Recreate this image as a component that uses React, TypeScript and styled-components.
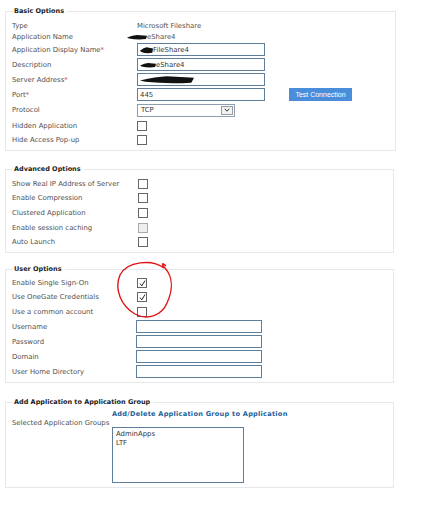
import styled, { createGlobalStyle } from "styled-components";

const GlobalStyle = createGlobalStyle`
  body {
    margin: 0;
    background: #fff;
    font-family: "DejaVu Sans", Verdana, sans-serif;
    font-size: 6.9px;
    color: #505050;
  }
`;

const Page = styled.div`
  position: relative;
  width: 395px;
  padding: 6px 0 0 5px;
`;

const Box = styled.fieldset<{ $w: number; $gap: number; $pt?: number; $pb?: number }>`
  box-sizing: border-box;
  width: ${(p) => p.$w}px;
  min-width: 0;
  margin: 0 0 ${(p) => p.$gap}px;
  padding: ${(p) => p.$pt ?? 2}px 0 ${(p) => p.$pb ?? 3}px 6px;
  border: 1px solid #e8e8e8;
`;

const Legend = styled.legend`
  padding: 0 3px 0 1px;
  margin-left: 1px;
  font-size: 6.5px;
  font-weight: bold;
  line-height: 10px;
  color: #222;
`;

const Row = styled.div<{ $h: number; $label?: number; $top?: boolean }>`
  display: grid;
  grid-template-columns: ${(p) => p.$label ?? 125}px 1fr;
  align-items: ${(p) => (p.$top ? "start" : "center")};
  height: ${(p) => p.$h}px;
`;

const Label = styled.div`
  white-space: nowrap;
  line-height: 8px;
`;

const Req = styled.span`
  color: #d43a3a;
`;

const Value = styled.div<{ $shift?: number }>`
  display: flex;
  align-items: center;
  white-space: nowrap;
  margin-left: ${(p) => p.$shift ?? 0}px;
`;

const Controls = styled.div`
  display: flex;
  align-items: center;
`;

const Field = styled.div<{ $w: number }>`
  box-sizing: border-box;
  display: flex;
  align-items: center;
  width: ${(p) => p.$w}px;
  height: 13px;
  padding: 0 2px;
  border: 1px solid #5f7e9b;
  background: #fff;
  color: #333;
  white-space: nowrap;
  overflow: hidden;
`;

const Select = styled.div`
  box-sizing: border-box;
  display: flex;
  align-items: center;
  justify-content: space-between;
  width: 98px;
  height: 13px;
  padding: 0 1px 0 3px;
  border: 1px solid #8c9db0;
  color: #333;
`;

const DropBtn = styled.span`
  box-sizing: border-box;
  display: flex;
  align-items: center;
  justify-content: center;
  width: 12px;
  height: 9px;
  border: 1px solid #9a9a9a;
  background: #f2f2f2;
`;

const TestButton = styled.div`
  margin-left: 24px;
  width: 63px;
  height: 13px;
  display: flex;
  align-items: center;
  justify-content: center;
  background: #4a8edb;
  color: #fff;
  font-family: "Liberation Sans", Arial, sans-serif;
  font-size: 7px;
`;

const Check = styled.span<{ $muted?: boolean }>`
  box-sizing: border-box;
  display: flex;
  align-items: center;
  justify-content: center;
  width: 10px;
  height: 10px;
  border: 1px solid ${(p) => (p.$muted ? "#a9a9a9" : "#666")};
  background: ${(p) => (p.$muted ? "#efefef" : "#fff")};
`;

const Link = styled.div`
  font-size: 6.6px;
  font-weight: bold;
  letter-spacing: 0.25px;
  color: #1f5f9c;
  white-space: nowrap;
`;

const ListBox = styled.div`
  box-sizing: border-box;
  width: 132px;
  height: 56px;
  margin-top: 8px;
  padding: 2px 3px;
  border: 1px solid #5f7e9b;
  color: #333;
  line-height: 9px;
`;

const Annotation = styled.svg`
  position: absolute;
  left: 0;
  top: 0;
  pointer-events: none;
`;

const Blot = ({ w, h = 7 }: { w: number; h?: number }) => (
  <svg width={w} height={h} viewBox={`0 0 ${w} ${h}`}>
    <path
      d={`M0 ${h * 0.6} Q ${w * 0.3} ${h * 0.2} ${w * 0.5} ${h * 0.15} L ${w} ${h * 0.3} L ${w * 0.95} ${h * 0.85} Q ${w * 0.5} ${h} ${w * 0.1} ${h * 0.75} Z`}
      fill="#111"
    />
  </svg>
);

const Tick = () => (
  <svg width="7" height="7" viewBox="0 0 7 7">
    <path d="M1 3.6 L2.8 5.8 L6 0.6" stroke="#222" strokeWidth="1" fill="none" />
  </svg>
);

const Chevron = () => (
  <svg width="6" height="4" viewBox="0 0 6 4">
    <path d="M0.8 0.8 L3 3.2 L5.2 0.8" stroke="#333" strokeWidth="1" fill="none" />
  </svg>
);

const advanced = [
  "Show Real IP Address of Server",
  "Enable Compression",
  "Clustered Application",
  "Enable session caching",
  "Auto Launch",
];

const advHeights = [15, 14, 15, 15, 14];

export default function App() {
  return (
    <>
      <GlobalStyle />
      <Page>
        <Box $w={391} $gap={13} $pt={4}>
          <Legend>Basic Options</Legend>
          <Row $h={11}>
            <Label>Type</Label>
            <Value>Microsoft Fileshare</Value>
          </Row>
          <Row $h={11}>
            <Label>Application Name</Label>
            <Value $shift={-10}>
              <Blot w={20} h={6} />
              eShare4
            </Value>
          </Row>
          <Row $h={15}>
            <Label>
              Application Display Name<Req>*</Req>
            </Label>
            <Field $w={128}>
              <Blot w={13} h={8} />
              FileShare4
            </Field>
          </Row>
          <Row $h={15}>
            <Label>Description</Label>
            <Field $w={128}>
              <Blot w={16} h={6} />
              eShare4
            </Field>
          </Row>
          <Row $h={15}>
            <Label>
              Server Address<Req>*</Req>
            </Label>
            <Field $w={128}>
              <Blot w={54} h={9} />
            </Field>
          </Row>
          <Row $h={15}>
            <Label>
              Port<Req>*</Req>
            </Label>
            <Controls>
              <Field $w={128}>445</Field>
              <TestButton>Test Connection</TestButton>
            </Controls>
          </Row>
          <Row $h={16}>
            <Label>Protocol</Label>
            <Select>
              TCP
              <DropBtn>
                <Chevron />
              </DropBtn>
            </Select>
          </Row>
          <Row $h={15}>
            <Label>Hidden Application</Label>
            <Check />
          </Row>
          <Row $h={14}>
            <Label>Hide Access Pop-up</Label>
            <Check />
          </Row>
        </Box>

        <Box $w={389} $gap={11}>
          <Legend>Advanced Options</Legend>
          {advanced.map((label, i) => (
            <Row key={label} $h={advHeights[i]} $label={126}>
              <Label>{label}</Label>
              <Check $muted={i === 3} />
            </Row>
          ))}
        </Box>

        <Box $w={389} $gap={14}>
          <Legend>User Options</Legend>
          <Row $h={14}>
            <Label>Enable Single Sign-On</Label>
            <Check>
              <Tick />
            </Check>
          </Row>
          <Row $h={14}>
            <Label>Use OneGate Credentials</Label>
            <Check>
              <Tick />
            </Check>
          </Row>
          <Row $h={15}>
            <Label>Use a common account</Label>
            <Check />
          </Row>
          {["Username", "Password", "Domain", "User Home Directory"].map((label) => (
            <Row key={label} $h={15} $label={124}>
              <Label>{label}</Label>
              <Field $w={126} />
            </Row>
          ))}
        </Box>

        <Box $w={389} $gap={0} $pb={4}>
          <Legend>Add Application to Application Group</Legend>
          <Row $h={10} $label={100}>
            <span />
            <Link>Add/Delete Application Group to Application</Link>
          </Row>
          <Row $h={64} $label={100} $top>
            <Label>Selected Application Groups</Label>
            <ListBox>
              <div>AdminApps</div>
              <div>LTF</div>
            </ListBox>
          </Row>
        </Box>

        <Annotation width="439" height="508">
          <path
            d="M164 268 C 152 259, 127 261, 120 275 C 114 289, 121 306, 135 314 C 148 321, 162 315, 167 303 C 173 290, 173 277, 165 268 C 161 264, 162 262, 166 266"
            stroke="#e01515"
            strokeWidth="1.4"
            fill="none"
          />
        </Annotation>
      </Page>
    </>
  );
}
